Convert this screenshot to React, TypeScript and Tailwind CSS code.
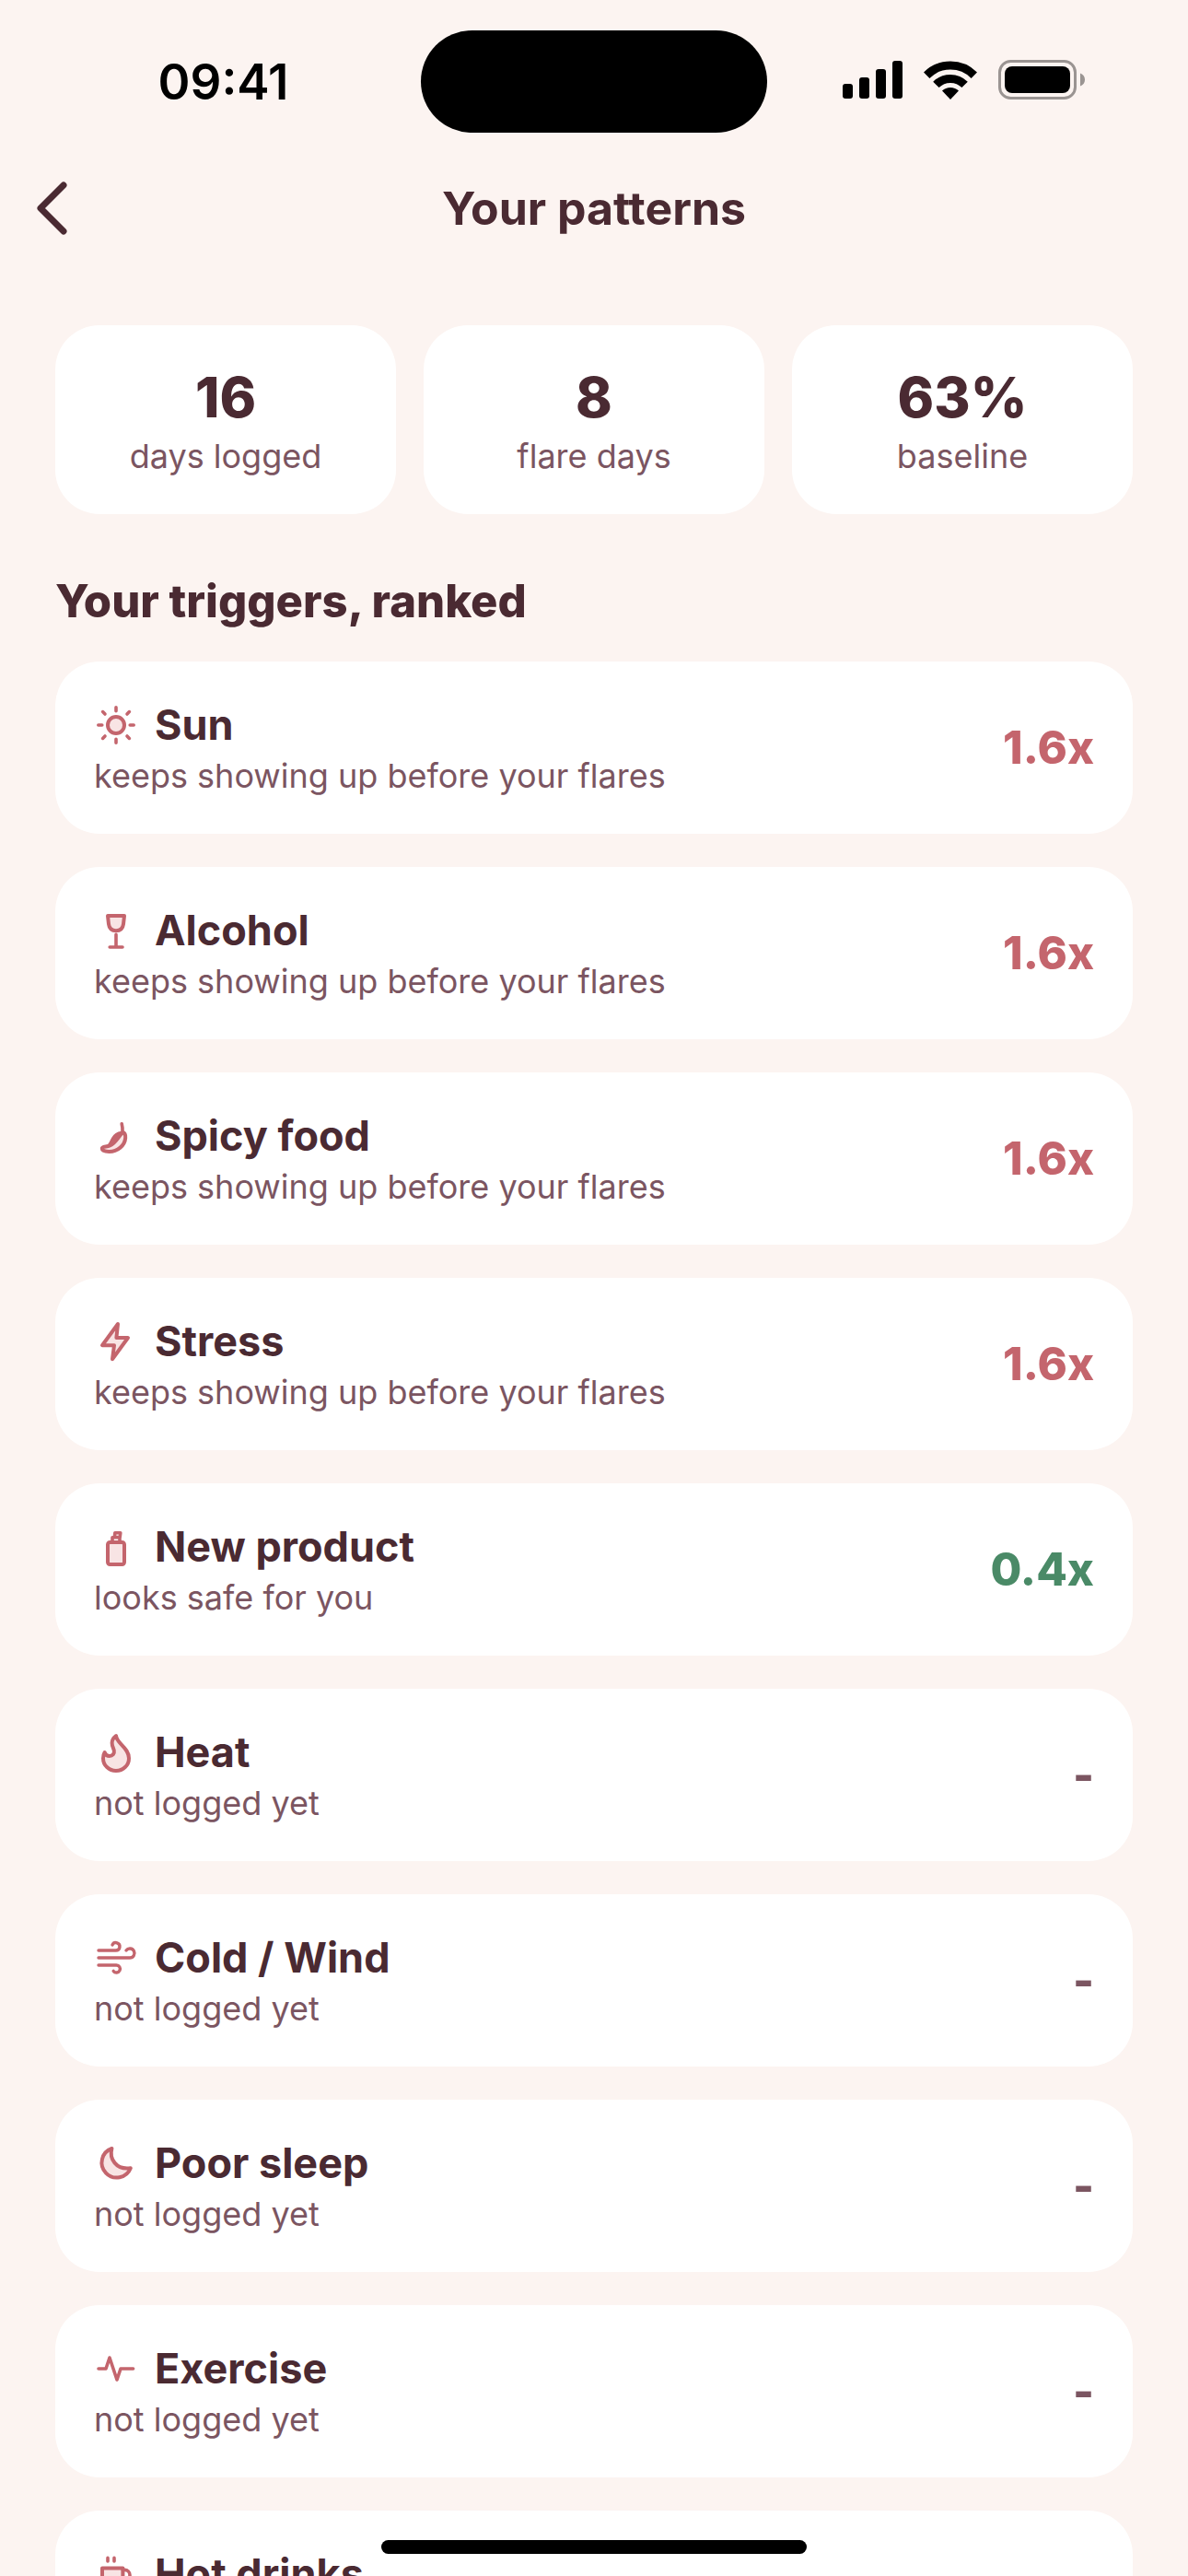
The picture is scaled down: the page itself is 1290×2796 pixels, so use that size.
import type { ReactNode } from 'react';

type Tone = 'bad' | 'good' | 'none';

interface Trigger {
    name: string;
    note: string;
    score: string;
    tone: Tone;
    icon: ReactNode;
}

const toneClass: Record<Tone, string> = {
    bad: 'text-[#c4656d]',
    good: 'text-[#4a8a67]',
    none: 'text-[#7b5561]',
};

const stats = [
    { value: '16', label: 'days logged' },
    { value: '8', label: 'flare days' },
    { value: '63%', label: 'baseline' },
];

const TINT = '#f8e4e4';

const triggers: Trigger[] = [
    {
        name: 'Sun',
        note: 'keeps showing up before your flares',
        score: '1.6x',
        tone: 'bad',
        icon: (
            <>
                <circle cx="12" cy="12" r="4.5" fill={TINT} />
                <path
                    strokeWidth="1.8"
                    d="M12 2.4v2M12 19.6v2M2.4 12h2M19.6 12h2M4.8 4.8L6 6M18 18l1.2 1.2M4.8 19.2L6 18M18 6l1.2-1.2"
                />
            </>
        ),
    },
    {
        name: 'Alcohol',
        note: 'keeps showing up before your flares',
        score: '1.6x',
        tone: 'bad',
        icon: (
            <>
                <path
                    fill={TINT}
                    d="M7.5 4h9l-.5 4.5c-.3 2.4-1.8 3.600-4 3.600s-3.700-1.200-4-3.600z"
                />
                <path strokeWidth="1.8" d="M12 14.2V21M8.6 21h6.9" />
            </>
        ),
    },
    {
        name: 'Spicy food',
        note: 'keeps showing up before your flares',
        score: '1.6x',
        tone: 'bad',
        icon: (
            <>
                <path
                    fill={TINT}
                    d="M15.6 10c1.2.4 1.6 1.6 1.5 3-.3 4.2-4.3 7.500-8.800 7.500-2 0-3.900-.6-3.900-1.700s2.300-.8 4.300-1.600c3.300-1.400 4.500-4.800 6.900-7.200z"
                />
                <path
                    strokeWidth="1.8"
                    d="M8.4 16.9c1.4-1.5 1.7-5 4.6-6.1.9-.3 1.7-.4 2.6-.8M11.500 14.500l2-2.800M15.100 5.400c.4 1.500.5 2.900.4 4.400"
                />
            </>
        ),
    },
    {
        name: 'Stress',
        note: 'keeps showing up before your flares',
        score: '1.6x',
        tone: 'bad',
        icon: <path fill={TINT} d="M13 2.500L4.500 14.100H11l-1 7.500L18.500 10h-6.300z" />,
    },
    {
        name: 'New product',
        note: 'looks safe for you',
        score: '0.4x',
        tone: 'good',
        icon: (
            <>
                <rect x="7.500" y="9.500" width="9" height="12" rx="1.200" fill={TINT} />
                <path strokeWidth="1.800" d="M10 9.200V6.900h4v2.300M11.200 6.800l.2-2.400h3l-.3 2.400z" />
            </>
        ),
    },
    {
        name: 'Heat',
        note: 'not logged yet',
        score: '-',
        tone: 'none',
        icon: (
            <path
                fill={TINT}
                d="M12 3c.4 4.400 7 6.400 7 12.200a7 6.800 0 0 1-14 0c0-1.300.3-2.400.8-3.200.4 1.200 1.400 2 2.600 2 1.800 0 2.800-1.300 2.500-3-.2-1.300-1.100-2.200-1.100-4.100 0-1.700.9-2.900 2.200-3.900z"
            />
        ),
    },
    {
        name: 'Cold / Wind',
        note: 'not logged yet',
        score: '-',
        tone: 'none',
        icon: (
            <path
                strokeWidth="1.7"
                d="M2.500 8h9.400a2.100 2.100 0 1 0-1.900-3M2.500 12h17a2.500 2.500 0 1 0-2-4M2.500 16h9.700a2 2 0 1 1-1.600 3.200"
            />
        ),
    },
    {
        name: 'Poor sleep',
        note: 'not logged yet',
        score: '-',
        tone: 'none',
        icon: <path fill={TINT} d="M19.900 14.600A8.100 8.100 0 1 1 9.700 4C8.200 9.500 12 15.800 19.900 14.600z" />,
    },
    {
        name: 'Exercise',
        note: 'not logged yet',
        score: '-',
        tone: 'none',
        icon: <path strokeWidth="1.8" d="M2.500 12h4l2-6 4 12 2-6h6.800" />,
    },
    {
        name: 'Hot drinks',
        note: 'not logged yet',
        score: '-',
        tone: 'none',
        icon: (
            <>
                <path fill={TINT} d="M4.500 8.700h11.200v7.300a4 4 0 0 1-4 4H8.500a4 4 0 0 1-4-4z" />
                <path strokeWidth="1.8" d="M7.500 3.200v1.800M11 3.200v1.800M15.700 9.700h1a2.800 2.800 0 0 1 0 5.600h-1" />
            </>
        ),
    },
];

function StatusBar() {
    return (
        <div className="grid grid-cols-[1fr_376px_1fr] items-center pt-[33px] text-black">
            <div className="pl-7 text-center text-[53px] leading-[60px] font-semibold">09:41</div>
            <div className="h-[111px] rounded-full bg-black" />
            <div className="flex items-center justify-center gap-[23px] pr-[30px] pb-1">
                <svg width="65" height="42" viewBox="0 0 65 42" aria-hidden="true">
                    <rect x="0" y="25" width="11" height="16" rx="3" />
                    <rect x="18" y="18" width="11" height="23" rx="3" />
                    <rect x="36" y="9" width="11" height="32" rx="3" />
                    <rect x="54" y="0" width="11" height="41" rx="3" />
                </svg>
                <svg width="58" height="42" viewBox="0 0 58 42" aria-hidden="true">
                    <path d="M3.200 15.700a36.500 36.500 0 0 1 51.600 0" fill="none" stroke="black" strokeWidth="9" />
                    <path d="M13.400 25.900a22 22 0 0 1 31.200 0" fill="none" stroke="black" strokeWidth="9" />
                    <path d="M29 42l-9-9.500a13 13 0 0 1 18 0z" />
                </svg>
                <svg width="95" height="43" viewBox="0 0 95 43" aria-hidden="true">
                    <rect x="1.500" y="1.500" width="82" height="40" rx="12" fill="none" stroke="#9a9492" strokeWidth="3" />
                    <rect x="7" y="7" width="71" height="29" rx="8" />
                    <path d="M89 14.500c6.700 2.200 6.700 11.800 0 14z" fill="#9a9492" />
                </svg>
            </div>
        </div>
    );
}

function TriggerCard({ trigger }: { trigger: Trigger }) {
    return (
        <li className="flex items-center justify-between rounded-[48px] bg-white p-[42px]">
            <div>
                <div className="flex items-center gap-[18px]">
                    <svg
                        className="size-12 text-[#c4656d]"
                        viewBox="0 0 24 24"
                        fill="none"
                        stroke="currentColor"
                        strokeWidth="2"
                        strokeLinecap="round"
                        strokeLinejoin="round"
                        aria-hidden="true"
                    >
                        {trigger.icon}
                    </svg>
                    <h3 className="text-[45px] leading-[54px] font-bold">{trigger.name}</h3>
                </div>
                <p className="mt-2 text-[36px] leading-[41px] text-[#7b5561]">{trigger.note}</p>
            </div>
            <span className={`text-[49px] leading-[57px] font-extrabold ${toneClass[trigger.tone]}`}>
                {trigger.score}
            </span>
        </li>
    );
}

function App() {
    return (
        <div className="relative h-screen overflow-hidden bg-[#fcf4f1] font-['Inter',sans-serif] text-[#4a2a32]">
            <StatusBar />

            <header className="grid grid-cols-[1fr_auto_1fr] items-center px-[30px] pt-8">
                <button type="button" aria-label="Back" className="size-[99px] cursor-pointer">
                    <svg width="54" height="66" viewBox="0 0 54 66" fill="none" aria-hidden="true">
                        <path
                            d="M39 8L14 33l25 25"
                            stroke="currentColor"
                            strokeWidth="7"
                            strokeLinecap="round"
                            strokeLinejoin="round"
                        />
                    </svg>
                </button>
                <h1 className="text-[50px] leading-[60px] font-bold">Your patterns</h1>
            </header>

            <main className="px-[60px] pt-[78px]">
                <ul className="grid grid-cols-3 gap-[30px]">
                    {stats.map((stat) => (
                        <li key={stat.label} className="rounded-[48px] bg-white p-[42px] text-center">
                            <div className="text-[60px] leading-[72px] font-extrabold">{stat.value}</div>
                            <div className="mt-2 text-[36px] leading-[41px] text-[#7b5561]">{stat.label}</div>
                        </li>
                    ))}
                </ul>

                <h2 className="mt-[66px] mb-9 text-[49px] leading-[58px] font-extrabold">Your triggers, ranked</h2>

                <ul className="flex flex-col gap-9">
                    {triggers.map((trigger) => (
                        <TriggerCard key={trigger.name} trigger={trigger} />
                    ))}
                </ul>
            </main>

            {/* home indicator */}
            <div className="absolute bottom-6 left-1/2 h-[15px] w-[462px] -translate-x-1/2 rounded-full bg-black" />
        </div>
    );
}

export default App;
